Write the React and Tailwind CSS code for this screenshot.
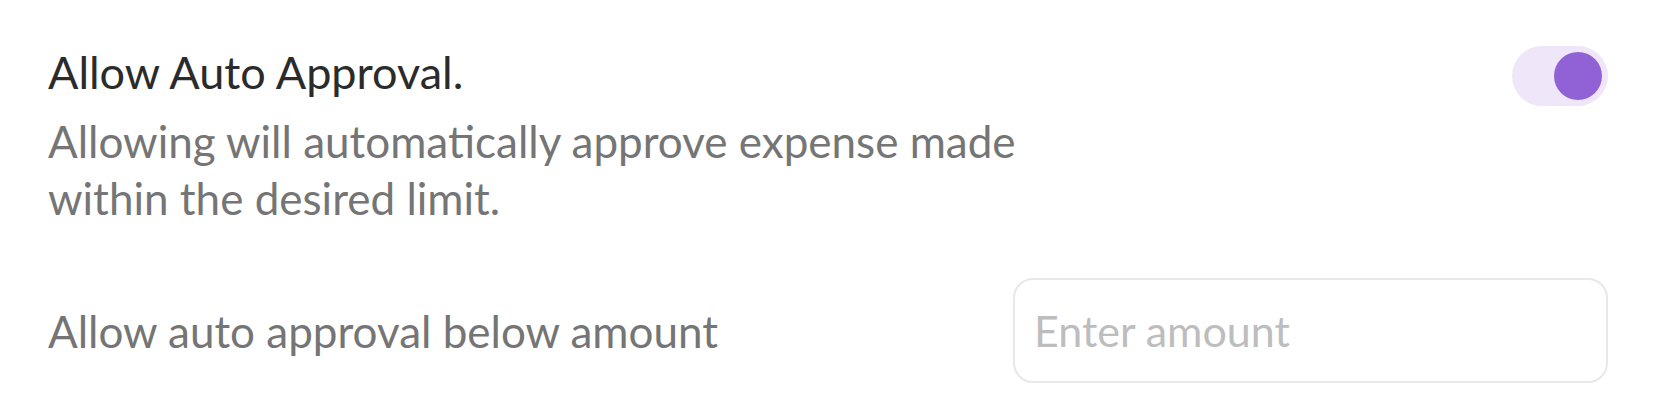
import React, { useState } from "react";

const App = () => {
  const [enabled, setEnabled] = useState(true);
  const [amount, setAmount] = useState("");

  return (
    <div className="min-h-screen w-full bg-white px-12 pt-[44px] font-['Lato',sans-serif]">
      {/* Auto approval toggle row */}
      <div className="flex items-start justify-between">
        <div>
          <h2 className="text-[45px] leading-[56px] text-[#2b2b2b]">
            Allow Auto Approval.
          </h2>
          <p className="mt-[13px] max-w-[1000px] text-[44px] leading-[57px] text-[#757575]">
            Allowing will automatically approve expense made within the desired limit.
          </p>
        </div>
        <button
          onClick={() => setEnabled(!enabled)}
          className={`mt-[2px] flex h-[60px] w-[96px] items-center rounded-full px-[6px] ${
            enabled ? "justify-end bg-[#efe7f9]" : "justify-start bg-[#eeeeee]"
          }`}
        >
          <span
            className={`h-[48px] w-[48px] rounded-full ${
              enabled ? "bg-[#9162d6]" : "bg-white"
            }`}
          />
        </button>
      </div>

      {/* Amount row */}
      <div className="mt-[51px] flex items-center justify-between">
        <label className="text-[44px] leading-[56px] text-[#757575]">
          Allow auto approval below amount
        </label>
        <input
          type="text"
          value={amount}
          onChange={(e) => setAmount(e.target.value)}
          placeholder="Enter amount"
          className="h-[105px] w-[595px] rounded-[20px] border-2 border-[#e8e8e8] px-[19px] text-[43px] text-[#2b2b2b] outline-none placeholder:text-[#bdbdbd]"
        />
      </div>
    </div>
  );
};

export default App;
